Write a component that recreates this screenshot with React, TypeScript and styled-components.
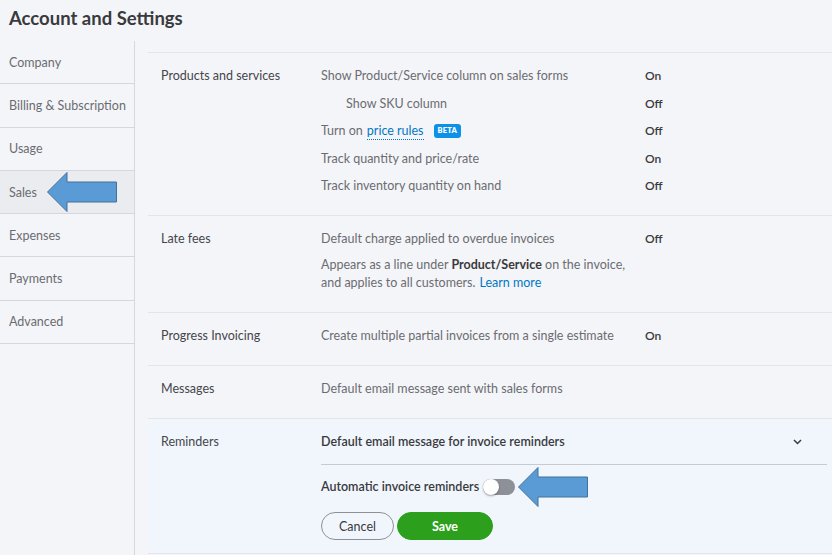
import React from 'react';
import styled, { createGlobalStyle } from 'styled-components';

const Global = createGlobalStyle`
  html, body { margin: 0; padding: 0; height: 100%; background: #f4f5f8; }
  body { font-family: Lato, "Open Sans", "Liberation Sans", sans-serif; color: #393a3d; }
  #root { height: 100%; }
  * { box-sizing: border-box; }
`;

const Page = styled.div`
  height: 100%;
  display: flex;
  flex-direction: column;
`;

const Title = styled.h1`
  margin: 0;
  height: 41px;
  padding: 8px 9px 0;
  font-size: 18.5px;
  font-weight: 700;
  color: #393a3d;
  line-height: 20px;
`;

const Body = styled.div`
  flex: 1;
  display: flex;
`;

const Sidebar = styled.nav`
  width: 135px;
  flex-shrink: 0;
  border-right: 1px solid #d4d7dc;
`;

const NavItem = styled.div<{ $active?: boolean }>`
  position: relative;
  height: 43.3px;
  display: flex;
  align-items: center;
  padding-left: 9px;
  font-size: 12.5px;
  color: #6b6c72;
  border-bottom: 1px solid #d4d7dc;
  background: ${p => (p.$active ? '#ebecef' : 'transparent')};
`;

const Content = styled.main`
  flex: 1;
  padding-left: 13px;
  padding-top: 11px;
`;

const Section = styled.section<{ $highlight?: boolean; $last?: boolean }>`
  display: flex;
  padding: ${p => (p.$last ? '14px 0 13px 13px' : '14px 0 20px 13px')};
  border-top: 1px solid #e3e5e8;
  border-bottom: ${p => (p.$last ? '1px solid #e3e5e8' : 'none')};
  background: ${p => (p.$highlight ? '#f1f6fd' : 'transparent')};
  font-size: 12.5px;
  line-height: 18px;
`;

const Label = styled.div`
  width: 160px;
  flex-shrink: 0;
  color: #45464b;
`;

const Rows = styled.div`
  flex: 1;
  display: flex;
  flex-direction: column;
  gap: 9.5px;
  padding-right: 5px;
`;

const Row = styled.div<{ $indent?: boolean }>`
  display: grid;
  grid-template-columns: 324px 1fr;
  padding-left: ${p => (p.$indent ? '25px' : '0')};
`;

const RowText = styled.span`
  color: #6b6c72;
  display: flex;
  align-items: center;
`;

const Value = styled.span<{ $shift?: boolean }>`
  color: #393a3d;
  font-weight: 600;
  font-size: 12px;
  margin-left: ${p => (p.$shift ? '-25px' : '0')};
`;

const Link = styled.a`
  color: #0077c5;
  text-decoration: none;
  border-bottom: 1px dotted #0077c5;
  line-height: 16px;
  margin-left: 4px;
`;

const PlainLink = styled.a`
  color: #0077c5;
  text-decoration: none;
  margin-left: 4px;
`;

const Beta = styled.span`
  display: inline-block;
  margin-left: 10px;
  background: #0d91e8;
  color: #fff;
  font-size: 7.5px;
  font-weight: 800;
  padding: 0 4px;
  height: 14px;
  line-height: 14px;
  border-radius: 3px;
  letter-spacing: 0.2px;
`;

const Para = styled.div`
  margin: 8px 0 0;
  color: #6b6c72;
  display: flex;
  flex-direction: column;
`;

const ParaLine = styled.div`
  display: flex;
  white-space: pre;
`;

const Strong = styled.span`
  color: #393a3d;
  font-weight: 700;
`;

const Stack = styled.div`
  flex: 1;
  padding-right: 5px;
`;

const ReminderHead = styled.div`
  display: flex;
  justify-content: space-between;
  align-items: center;
  padding: 0 25px 13px 0;
  border-bottom: 1px solid #c8cacf;
  font-weight: 600;
  color: #393a3d;
`;

const ToggleRow = styled.div`
  position: relative;
  display: flex;
  align-items: center;
  margin-top: 13px;
  font-weight: 600;
  color: #393a3d;
  height: 18px;
`;

const Toggle = styled.span`
  position: relative;
  display: inline-block;
  width: 32px;
  height: 16px;
  border-radius: 8px;
  background: #8d9096;
  margin-left: 4px;
  &::after {
    content: '';
    position: absolute;
    left: 0;
    top: 0;
    width: 16px;
    height: 16px;
    border-radius: 50%;
    background: #fff;
    box-shadow: 0 1px 2px rgba(0,0,0,0.35);
  }
`;

const Buttons = styled.div`
  display: flex;
  gap: 3px;
  margin-top: 16px;
`;

const Btn = styled.button<{ $primary?: boolean }>`
  height: 28px;
  border-radius: 14px;
  font-family: inherit;
  font-size: 12.5px;
  padding: 0;
  width: ${p => (p.$primary ? '96px' : '73px')};
  font-weight: ${p => (p.$primary ? 700 : 400)};
  color: ${p => (p.$primary ? '#fff' : '#393a3d')};
  background: ${p => (p.$primary ? '#2ca01c' : 'transparent')};
  border: ${p => (p.$primary ? '1px solid #2ca01c' : '1px solid #8d9096')};
`;

const ArrowWrap = styled.svg<{ $left: number; $top: number }>`
  position: absolute;
  left: ${p => p.$left}px;
  top: ${p => p.$top}px;
  overflow: visible;
`;

const Arrow = ({ left, top }: { left: number; top: number }) => (
  <ArrowWrap $left={left} $top={top} width="70" height="40" viewBox="0 0 70 40">
    <polygon
      points="0.5,20 20,0.5 20,10 69.5,10 69.5,30 20,30 20,39.5"
      fill="#5b9bd5"
      stroke="#41719c"
      strokeWidth="1"
    />
  </ArrowWrap>
);

const Chevron = () => (
  <svg width="9" height="6" viewBox="0 0 9 6">
    <polyline points="1,1 4.5,4.5 8,1" fill="none" stroke="#393a3d" strokeWidth="1.5" />
  </svg>
);

const navItems = ['Company', 'Billing & Subscription', 'Usage', 'Sales', 'Expenses', 'Payments', 'Advanced'];

export default function App() {
  return (
    <>
      <Global />
      <Page>
        <Title>Account and Settings</Title>
        <Body>
          <Sidebar>
            {navItems.map(n => (
              <NavItem key={n} $active={n === 'Sales'}>
                {n}
                {n === 'Sales' && <Arrow left={47} top={1} />}
              </NavItem>
            ))}
          </Sidebar>
          <Content>
            <Section>
              <Label>Products and services</Label>
              <Rows>
                <Row>
                  <RowText>Show Product/Service column on sales forms</RowText>
                  <Value>On</Value>
                </Row>
                <Row $indent>
                  <RowText>Show SKU column</RowText>
                  <Value $shift>Off</Value>
                </Row>
                <Row>
                  <RowText>
                    Turn on <Link>price rules</Link>
                    <Beta>BETA</Beta>
                  </RowText>
                  <Value>Off</Value>
                </Row>
                <Row>
                  <RowText>Track quantity and price/rate</RowText>
                  <Value>On</Value>
                </Row>
                <Row>
                  <RowText>Track inventory quantity on hand</RowText>
                  <Value>Off</Value>
                </Row>
              </Rows>
            </Section>
            <Section>
              <Label>Late fees</Label>
              <Stack>
                <Row>
                  <RowText>Default charge applied to overdue invoices</RowText>
                  <Value>Off</Value>
                </Row>
                <Para>
                  <ParaLine>
                    <span>Appears as a line under </span>
                    <Strong>Product/Service</Strong>
                    <span> on the invoice,</span>
                  </ParaLine>
                  <ParaLine>
                    <span>and applies to all customers.</span>
                    <PlainLink>Learn more</PlainLink>
                  </ParaLine>
                </Para>
              </Stack>
            </Section>
            <Section>
              <Label>Progress Invoicing</Label>
              <Stack>
                <Row>
                  <RowText>Create multiple partial invoices from a single estimate</RowText>
                  <Value>On</Value>
                </Row>
              </Stack>
            </Section>
            <Section>
              <Label>Messages</Label>
              <Stack>
                <Row>
                  <RowText>Default email message sent with sales forms</RowText>
                </Row>
              </Stack>
            </Section>
            <Section $highlight $last>
              <Label>Reminders</Label>
              <Stack>
                <ReminderHead>
                  <span>Default email message for invoice reminders</span>
                  <Chevron />
                </ReminderHead>
                <ToggleRow>
                  Automatic invoice reminders
                  <Toggle />
                  <Arrow left={197} top={-11} />
                </ToggleRow>
                <Buttons>
                  <Btn>Cancel</Btn>
                  <Btn $primary>Save</Btn>
                </Buttons>
              </Stack>
            </Section>
          </Content>
        </Body>
      </Page>
    </>
  );
}
